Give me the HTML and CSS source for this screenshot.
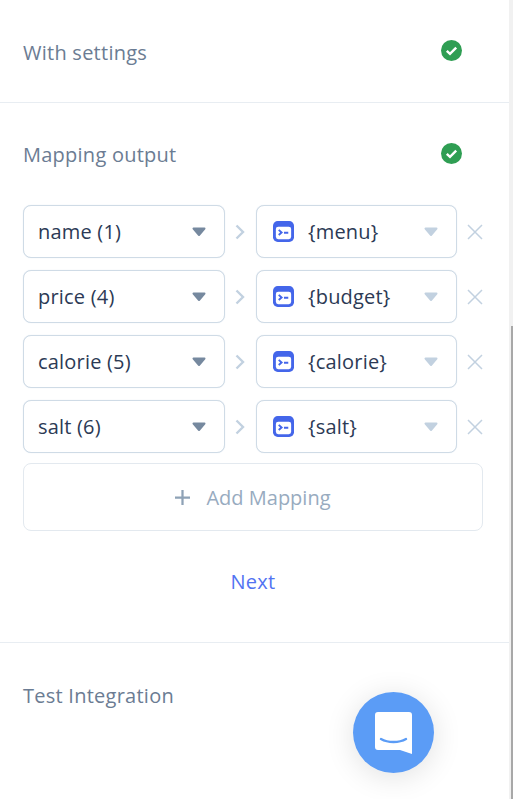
FILE: index.html
```html
<!DOCTYPE html>
<html lang="en">
<head>
<meta charset="utf-8">
<title>Mapping output</title>
<link rel="stylesheet" href="styles.css">
</head>
<body>
<div class="page">
  <main class="content">
    <section class="step step-settings">
      <h2 class="step-title">With settings</h2>
      <svg class="check" viewBox="0 0 21 21"><circle cx="10.5" cy="10.5" r="10.5" fill="#2f9e53"/><path d="M5.800 10.800l3.200 3.100 6.200-6.300" fill="none" stroke="#fff" stroke-width="2.400"/></svg>
    </section>
    <section class="step step-mapping">
      <div class="mapping-head">
        <h2 class="step-title">Mapping output</h2>
        <svg class="check check-mapping" viewBox="0 0 21 21"><circle cx="10.5" cy="10.5" r="10.5" fill="#2f9e53"/><path d="M5.800 10.800l3.200 3.100 6.200-6.300" fill="none" stroke="#fff" stroke-width="2.400"/></svg>
      </div>
      <div class="rows">
        <div class="row">
          <div class="select"><span class="select-text">name (1)</span><svg class="caret caret-dark" viewBox="0 0 14 10"><path d="M1.500 1.500h11L7 8z" fill="currentColor" stroke="currentColor" stroke-width="2" stroke-linejoin="round"/></svg></div>
          <svg class="arrow" viewBox="0 0 10 16"><path d="M1.500 1.500L8 8l-6.500 6.500" fill="none" stroke="currentColor" stroke-width="2.400"/></svg>
          <div class="select select-var"><svg class="var-icon" viewBox="0 0 22 22"><rect width="22" height="22" rx="5" fill="#4466ea"/><rect x="3" y="6" width="16" height="13" rx="2.500" fill="#fff"/><path d="M6 9.300l3 2.700-3 2.700M11.500 12.300h4.500" fill="none" stroke="#4466ea" stroke-width="2"/></svg><span class="select-text">{menu}</span><svg class="caret caret-light" viewBox="0 0 14 10"><path d="M1.500 1.500h11L7 8z" fill="currentColor" stroke="currentColor" stroke-width="2" stroke-linejoin="round"/></svg></div>
          <svg class="remove" viewBox="0 0 16 16"><path d="M1 1l14 14M15 1L1 15" fill="none" stroke="currentColor" stroke-width="1.500"/></svg>
        </div>
        <div class="row">
          <div class="select"><span class="select-text">price (4)</span><svg class="caret caret-dark" viewBox="0 0 14 10"><path d="M1.500 1.500h11L7 8z" fill="currentColor" stroke="currentColor" stroke-width="2" stroke-linejoin="round"/></svg></div>
          <svg class="arrow" viewBox="0 0 10 16"><path d="M1.500 1.500L8 8l-6.500 6.500" fill="none" stroke="currentColor" stroke-width="2.400"/></svg>
          <div class="select select-var"><svg class="var-icon" viewBox="0 0 22 22"><rect width="22" height="22" rx="5" fill="#4466ea"/><rect x="3" y="6" width="16" height="13" rx="2.500" fill="#fff"/><path d="M6 9.300l3 2.700-3 2.700M11.500 12.300h4.500" fill="none" stroke="#4466ea" stroke-width="2"/></svg><span class="select-text">{budget}</span><svg class="caret caret-light" viewBox="0 0 14 10"><path d="M1.500 1.500h11L7 8z" fill="currentColor" stroke="currentColor" stroke-width="2" stroke-linejoin="round"/></svg></div>
          <svg class="remove" viewBox="0 0 16 16"><path d="M1 1l14 14M15 1L1 15" fill="none" stroke="currentColor" stroke-width="1.500"/></svg>
        </div>
        <div class="row">
          <div class="select"><span class="select-text">calorie (5)</span><svg class="caret caret-dark" viewBox="0 0 14 10"><path d="M1.500 1.500h11L7 8z" fill="currentColor" stroke="currentColor" stroke-width="2" stroke-linejoin="round"/></svg></div>
          <svg class="arrow" viewBox="0 0 10 16"><path d="M1.500 1.500L8 8l-6.500 6.500" fill="none" stroke="currentColor" stroke-width="2.400"/></svg>
          <div class="select select-var"><svg class="var-icon" viewBox="0 0 22 22"><rect width="22" height="22" rx="5" fill="#4466ea"/><rect x="3" y="6" width="16" height="13" rx="2.500" fill="#fff"/><path d="M6 9.300l3 2.700-3 2.700M11.500 12.300h4.500" fill="none" stroke="#4466ea" stroke-width="2"/></svg><span class="select-text">{calorie}</span><svg class="caret caret-light" viewBox="0 0 14 10"><path d="M1.500 1.500h11L7 8z" fill="currentColor" stroke="currentColor" stroke-width="2" stroke-linejoin="round"/></svg></div>
          <svg class="remove" viewBox="0 0 16 16"><path d="M1 1l14 14M15 1L1 15" fill="none" stroke="currentColor" stroke-width="1.500"/></svg>
        </div>
        <div class="row">
          <div class="select"><span class="select-text">salt (6)</span><svg class="caret caret-dark" viewBox="0 0 14 10"><path d="M1.500 1.500h11L7 8z" fill="currentColor" stroke="currentColor" stroke-width="2" stroke-linejoin="round"/></svg></div>
          <svg class="arrow" viewBox="0 0 10 16"><path d="M1.500 1.500L8 8l-6.500 6.500" fill="none" stroke="currentColor" stroke-width="2.400"/></svg>
          <div class="select select-var"><svg class="var-icon" viewBox="0 0 22 22"><rect width="22" height="22" rx="5" fill="#4466ea"/><rect x="3" y="6" width="16" height="13" rx="2.500" fill="#fff"/><path d="M6 9.300l3 2.700-3 2.700M11.500 12.300h4.500" fill="none" stroke="#4466ea" stroke-width="2"/></svg><span class="select-text">{salt}</span><svg class="caret caret-light" viewBox="0 0 14 10"><path d="M1.500 1.500h11L7 8z" fill="currentColor" stroke="currentColor" stroke-width="2" stroke-linejoin="round"/></svg></div>
          <svg class="remove" viewBox="0 0 16 16"><path d="M1 1l14 14M15 1L1 15" fill="none" stroke="currentColor" stroke-width="1.500"/></svg>
        </div>
      </div>
      <button class="add-mapping" type="button"><svg class="plus" viewBox="0 0 16 16"><path d="M8 0v16M0 8h16" stroke="currentColor" stroke-width="2.400"/></svg><span>Add Mapping</span></button>
      <div class="next">Next</div>
    </section>
    <section class="step step-test">
      <h2 class="step-title">Test Integration</h2>
    </section>
  </main>
  <div class="scrollbar"><div class="scrollbar-thumb"></div></div>
</div>
<button class="chat" type="button" aria-label="Chat"><svg viewBox="0 0 37 42" class="chat-icon"><path d="M3 0h31a3 3 0 0 1 3 3v39l-12-4H3a3 3 0 0 1-3-3V3a3 3 0 0 1 3-3z" fill="#fff"/><path d="M6 27c7 4 18 4 25 0" fill="none" stroke="#5b9cf6" stroke-width="2.400" stroke-linecap="round"/></svg></button>
</body>
</html>
```
FILE: styles.css
```css
html, body { margin: 0; padding: 0; height: 100%; overflow: hidden; background: #fff; }
body { font-family: "Open Sans", "Noto Sans", sans-serif; }
.page { display: flex; height: 799px; }
.content { flex: 1; min-width: 0; }
.scrollbar { width: 4px; background: #f1f1f1; padding: 326px 0 0 2px; box-sizing: border-box; }
.scrollbar-thumb { height: 473px; background: #a8a8a8; }
.step-title { margin: 0; font-size: 20px; letter-spacing: 0.25px; line-height: 26px; font-weight: 400; color: #6b7c93; }
.step { padding-left: 23px; }
.step-settings { display: flex; align-items: flex-start; height: 103px; padding-top: 40px; box-sizing: border-box; border-bottom: 1px solid #e8edf2; }
.step-mapping { padding-top: 39px; height: 540px; box-sizing: border-box; border-bottom: 1px solid #e8edf2; }
.mapping-head { display: flex; align-items: flex-start; }
.check { width: 21px; height: 21px; display: block; margin-left: auto; margin-right: 47px; }
.check-mapping { margin-top: 1px; }
.rows { display: flex; flex-direction: column; gap: 12px; margin-top: 37px; }
.row { display: flex; align-items: center; }
.select { width: 202px; height: 53px; box-sizing: border-box; border: 1px solid #cfdbe6; box-shadow: 0 0 1px #d8e2ec; border-radius: 8px; display: flex; align-items: center; padding: 0 18px 0 14px; background: #fff; }
.select-var { width: 201px; }
.select-text { font-size: 20px; letter-spacing: 0.2px; color: #2c3a55; flex: 1; white-space: nowrap; }
.caret { width: 14px; height: 10px; flex: none; }
.caret-dark { color: #76899f; }
.caret-light { color: #c2d1e0; }
.arrow { width: 10px; height: 16px; color: #c2d1e0; margin: 0 11px 0 10px; flex: none; }
.var-icon { width: 21px; height: 21px; flex: none; margin: 0 14px 0 2px; }
.remove { width: 16px; height: 16px; color: #c2d1e0; margin-left: 10px; flex: none; }
.add-mapping { display: flex; align-items: center; justify-content: center; gap: 16px; width: 460px; height: 68px; margin-top: 10px; padding: 0; background: #fff; border: 1.500px solid #e3e9ef; border-radius: 8px; font-family: inherit; font-size: 20px; color: #98abbf; }
.plus { width: 15px; height: 15px; color: #8ea2b6; }
.next { width: 460px; margin-top: 38px; text-align: center; font-size: 20px; letter-spacing: 0.3px; line-height: 26px; color: #5273f2; }
.step-test { padding-top: 40px; }
.chat { position: fixed; left: 353px; top: 692px; width: 81px; height: 81px; padding: 0; border: 0; border-radius: 50%; background: #5b9cf6; box-shadow: 0 4px 30px rgba(0,0,0,0.12); display: flex; align-items: center; justify-content: center; }
.chat-icon { width: 37px; height: 42px; }
```
